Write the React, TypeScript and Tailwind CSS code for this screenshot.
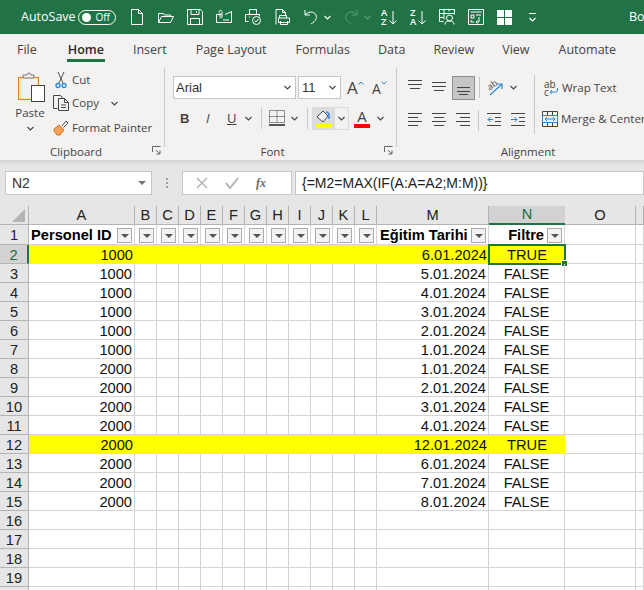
import React from "react";

const grid = "grid grid-cols-[29px_106px_repeat(11,22px)_112px_76px_71px_8px] leading-[17px]";
const ui = { fontFamily: '"Open Sans","Noto Sans",sans-serif' };
const cellFont = { fontFamily: '"Liberation Sans",Arial,sans-serif' };

const Chev = ({ c = "#444", className = "" }: { c?: string; className?: string }) => (
  <svg width="7" height="5" viewBox="0 0 7 5" className={`shrink-0 ${className}`} fill="none" stroke={c} strokeWidth="1.1">
    <path d="M.5 1l3 3 3-3" />
  </svg>
);

const Q = ({ children }: { children: React.ReactNode }) => (
  <svg width="16" height="16" viewBox="0 0 16 16" fill="none" stroke="#fff" strokeWidth="1" className="shrink-0">
    {children}
  </svg>
);

function TitleBar() {
  return (
    <div className="flex h-[34px] shrink-0 items-center whitespace-nowrap bg-[#217346] pl-[21px] text-white" style={ui}>
      <span className="w-[50px] shrink-0 text-[12.5px]">AutoSave</span>
      <div className="ml-[7px] flex h-[15px] w-[38px] shrink-0 items-center justify-between rounded-full border border-white pl-[3px] pr-[5px]">
        <span className="h-[9px] w-[9px] rounded-full bg-white" />
        <span className="text-[10px] leading-none">Off</span>
      </div>
      <div className="ml-[13px] flex shrink-0 items-center gap-[13px]">
        <Q><path d="M2.5 .5h7l4 4v11h-11zM9.5 .5v4h4" /></Q>
        <Q><path d="M.5 13.5v-9h5l1 1.5h6v2M.5 13.5l3-6h12l-3 6z" /></Q>
        <Q><path d="M.5 .5h13l2 2v13H.5zM4 .5v5h8v-5M3.5 15.5v-6h9v6M9.5 2v2" /></Q>
        <Q><path d="M.5 5.5h5M9 5.5l6.5-3v11H.5v-8M3 3.5c0-3 3-3 3 0v4c0 2-2 2-2 0V4M7 11h6" /></Q>
        <Q><path d="M4.5 5V.5h7V5M3.5 12.5h-3V5.5h14v2M4 8h1" /><circle cx="11.5" cy="11.5" r="4" /><path d="M9.5 11.5l1.5 1.5 2.5-3" /></Q>
        <Q><path d="M2 15.5V.5h6.5l3 3v3M8.5.5v3h3M5.5 9V6.5h7V9M4.5 13.5V9h11v4.5zM6.5 12v3.5h7V12" /></Q>
        <div className="flex w-[45px] items-center">
          <Q><path d="M2 1v5h5M2 6c3-4 9-4 11 0 1 3 0 6-5 9" /></Q>
          <Chev c="#fff" className="ml-[5px]" />
        </div>
      </div>
      <div className="ml-[-5px] flex w-[38px] shrink-0 items-center">
        <svg width="16" height="16" viewBox="0 0 16 16" fill="none" stroke="#5d9c7b" strokeWidth="1" className="shrink-0">
          <path d="M14 1v5H9M14 6C11 2 5 2 3 6c-1 3 0 6 5 9" />
        </svg>
        <Chev c="#5d9c7b" className="ml-[5px]" />
      </div>
      <div className="flex shrink-0 items-center gap-[13px]">
        <div className="relative h-[18px] w-[16px] shrink-0 text-[9.5px] font-semibold leading-[9px]">
          <div>A</div><div>Z</div>
          <svg width="8" height="14" viewBox="0 0 8 14" fill="none" stroke="#fff" className="absolute right-0 top-[3px]"><path d="M4 0v13M.5 9.5L4 13l3.500-3.500" /></svg>
        </div>
        <div className="relative h-[18px] w-[16px] shrink-0 text-[9.5px] font-semibold leading-[9px]">
          <div>Z</div><div>A</div>
          <svg width="8" height="14" viewBox="0 0 8 14" fill="none" stroke="#fff" className="absolute right-0 top-[3px]"><path d="M4 0v13M.5 9.5L4 13l3.500-3.500" /></svg>
        </div>
        <Q><path d="M.5 .5h15M.5 .5v12h4M.5 4.500h15M5 .5v10M10 .5v2M15.500 .5v5M.5 8.500h4" /><circle cx="10.500" cy="9" r="3" /><path d="M6 15.500c0-3 2-3.500 4.500-3.500s4.500 .5 4.500 3.500" /></Q>
        <Q><path d="M.5 .5h15v15H.5zM2.500 3h11M3 6h3v3H3zM8 6h5M3 11v2h3M11 8v5H8M9.500 11.500L8 13l1.500 1.500" /></Q>
        <div className="grid h-[15px] w-[15px] shrink-0 grid-cols-2 grid-rows-2 gap-[1px]">
          <span className="bg-white" /><span className="bg-white" /><span className="bg-white" /><span className="bg-white" />
        </div>
      </div>
      <div className="ml-[17px] flex w-[8px] shrink-0 flex-col gap-[3px]">
        <span className="h-px w-[7px] bg-white" />
        <Chev c="#fff" />
      </div>
      <span className="ml-[92px] shrink-0 text-[12.5px]">Book1 - Excel</span>
    </div>
  );
}

function Tabs() {
  const tabs: [string, string][] = [
    ["File", "ml-[17px]"], ["Insert", "ml-[28px]"], ["Page Layout", "ml-[29px]"], ["Formulas", "ml-[29px]"],
    ["Data", "ml-[28px]"], ["Review", "ml-[28px]"], ["View", "ml-[28px]"], ["Automate", "ml-[29px]"],
  ];
  const T = ([t, c]: [string, string]) => <span key={t} className={`${c} shrink-0 pt-[7px] text-[12.5px] text-[#444]`}>{t}</span>;
  return (
    <div className="flex h-[34px] shrink-0 items-start whitespace-nowrap bg-[#f3f2f1]" style={ui}>
      {T(tabs[0])}
      <div className="ml-[30px] flex h-[28px] shrink-0 flex-col items-center border-b-[3px] border-[#217346] px-[1px] pt-[7px] text-[12.5px] font-semibold text-[#2b2b2b]">Home</div>
      {tabs.slice(1).map(T)}
    </div>
  );
}

const Launcher = () => (
  <svg width="9" height="9" viewBox="0 0 9 9" fill="none" stroke="#666" className="absolute right-[3px] top-[1px]">
    <path d="M.5 6V.5H8.500M4 4l4 4M8 4.500V8H4.500" />
  </svg>
);

const GroupLabel = ({ children, launcher, className = "" }: { children: string; launcher?: boolean; className?: string }) => (
  <div className={`relative mt-auto flex h-[14px] justify-center text-[11.5px] leading-[14px] text-[#444] ${className}`} style={ui}>
    {children}
    {launcher && <Launcher />}
  </div>
);

const Lines = ({ rows }: { rows: [number, number, number][] }) => (
  <svg width="15" height="16" viewBox="0 0 15 16" stroke="#444" className="shrink-0">
    {rows.map(([y, a, b], i) => <path key={i} d={`M${a} ${y + 0.5}H${b}`} />)}
  </svg>
);

function Clipboard() {
  return (
    <div className="flex h-[92px] w-[164px] shrink-0 flex-col pb-[1px]">
      <div className="flex">
        <div className="ml-[15px] flex w-[30px] flex-col items-center pt-[3px]">
          <svg width="30" height="31" viewBox="0 0 30 31" className="shrink-0">
            <rect x="3.500" y="6.500" width="20" height="22" fill="#fde4a8" stroke="#e8801f" />
            <rect x="7" y="8" width="15" height="19" fill="#f3f2f1" />
            <path d="M8 7V4h4a2 2 0 014 0h3v3z" fill="#f3f2f1" stroke="#777" />
            <rect x="16.500" y="14.500" width="13" height="16" fill="#fff" stroke="#444" />
          </svg>
          <span className="mt-[3px] text-[11.5px] leading-[15px] text-[#444]" style={ui}>Paste</span>
          <Chev className="mt-[6px]" />
        </div>
        <div className="ml-[8px] flex flex-col text-[11.5px] text-[#444]" style={ui}>
          <div className="flex h-[23px] items-center pt-[1px]">
            <svg width="16" height="18" viewBox="0 0 16 18" fill="none" className="shrink-0">
              <path d="M5 1l5 11M11 1L6 12" stroke="#555" />
              <circle cx="5" cy="14.500" r="2" stroke="#2b88d8" strokeWidth="1.300" />
              <circle cx="11" cy="14.500" r="2" stroke="#2b88d8" strokeWidth="1.300" />
            </svg>
            <span className="ml-[3px] leading-none">Cut</span>
          </div>
          <div className="flex h-[24px] items-center">
            <svg width="16" height="16" viewBox="0 0 16 16" fill="none" stroke="#444" className="shrink-0">
              <path d="M4.500 13.500H.5V.5h7l2 2.500" />
              <path d="M5.500 3.500h6l4 4v8h-10zM11.500 3.500v4h4M8 10h5M8 12.500h5" />
            </svg>
            <span className="ml-[3px] leading-none">Copy</span>
            <Chev className="ml-[12px]" />
          </div>
          <div className="flex h-[25px] items-center">
            <svg width="16" height="16" viewBox="0 0 16 16" className="shrink-0">
              <path d="M1 9l5-4 5 5-4 5H4L1 11z" fill="#f2a05a" stroke="#d9731f" />
              <path d="M9 6l4-5 2 2-4.500 4.500" fill="#f3f2f1" stroke="#555" />
            </svg>
            <span className="ml-[3px] leading-none">Format Painter</span>
          </div>
        </div>
      </div>
      <GroupLabel launcher className="pr-[12px]">Clipboard</GroupLabel>
    </div>
  );
}

function Font() {
  return (
    <div className="flex h-[92px] w-[231px] shrink-0 flex-col pb-[1px]">
      <div className="ml-[8px] mt-[8px] flex items-center" style={cellFont}>
        <div className="flex h-[23px] w-[123px] items-center justify-between border border-[#c6c6c6] bg-white pl-[2px] pr-[4px] text-[13px] text-[#333]">
          Arial<Chev />
        </div>
        <div className="ml-[2px] flex h-[23px] w-[43px] items-center justify-between border border-[#c6c6c6] bg-white pl-[3px] pr-[4px] text-[13px] text-[#333]">
          11<Chev />
        </div>
        <div className="ml-[6px] flex h-[16px] w-[17px] items-start text-[17px] leading-[16px] text-[#444]" style={ui}>
          A
          <svg width="6" height="4" viewBox="0 0 6 4" fill="none" stroke="#2b88d8" className="mt-[1px]"><path d="M.5 3.500L3 1l2.500 2.500" /></svg>
        </div>
        <div className="ml-[8px] flex h-[16px] w-[16px] items-start text-[14px] leading-[17px] text-[#444]" style={ui}>
          A
          <svg width="6" height="4" viewBox="0 0 6 4" fill="none" stroke="#2b88d8" className="mt-[1px]"><path d="M.5 .5L3 3l2.500-2.500" /></svg>
        </div>
      </div>
      <div className="ml-[15px] mt-[8px] flex h-[23px] items-center text-[#444]">
        <span className="w-[26px] text-[13px] font-bold" style={cellFont}>B</span>
        <span className="w-[21px] text-[13px] italic" style={ui}>I</span>
        <span className="w-[18px] text-[13px] underline" style={ui}>U</span>
        <Chev />
        <span className="ml-[9px] h-[21px] w-px bg-[#c8c8c8]" />
        <svg width="16" height="17" viewBox="0 0 16 17" fill="none" className="ml-[7px]">
          <path d="M.5 .5h15v12H.5zM8 .5v12M.5 6.500h15" stroke="#333" strokeDasharray="1 1" />
          <path d="M0 15h16" stroke="#222" strokeWidth="1.500" />
        </svg>
        <Chev className="ml-[6px]" />
        <span className="ml-[9px] h-[21px] w-px bg-[#c8c8c8]" />
        <div className="ml-[4px] flex h-[23px] w-[37px] border border-[#dcdcdc]">
          <div className="flex w-[22px] flex-col items-center bg-[#dcdcdc] pt-[1px]">
            <svg width="16" height="15" viewBox="0 0 16 15" fill="none">
              <path d="M1 8l6-6 5 5-5 6z" stroke="#444" fill="#f3f2f1" />
              <path d="M13 10V6c0-2-2-3-3-3" stroke="#2b88d8" strokeWidth="1.500" />
            </svg>
            <span className="h-[4px] w-[16px] bg-[#ffff00]" />
          </div>
          <div className="flex flex-1 items-center justify-center"><Chev /></div>
        </div>
        <div className="ml-[5px] flex w-[16px] flex-col items-center">
          <span className="text-[15px] leading-[15px] text-[#444]" style={ui}>A</span>
          <span className="h-[4px] w-[16px] bg-[#ff0000]" />
        </div>
        <Chev className="ml-[7px]" />
      </div>
      <GroupLabel launcher className="pr-[16px]">Font</GroupLabel>
    </div>
  );
}

function Alignment() {
  return (
    <div className="flex h-[92px] flex-1 flex-col pb-[1px]">
      <div className="flex flex-1 whitespace-nowrap">
        <div className="ml-[11px] flex w-[126px] shrink-0 flex-col">
          <div className="mt-[7px] flex h-[25px] items-center">
            <div className="mr-[9px]"><Lines rows={[[0, 0, 14], [4, 0, 14], [8, 2, 12]]} /></div>
            <div className="mr-[5px]"><Lines rows={[[2, 0, 14], [6, 0, 14], [10, 2, 12]]} /></div>
            <div className="flex h-[24px] w-[23px] items-center justify-center border border-[#8f8f8f] bg-[#c6c6c6]">
              <Lines rows={[[7, 1, 14], [11, 1, 14], [14, 3, 12]]} />
            </div>
            <span className="ml-[4px] h-[21px] w-px bg-[#c8c8c8]" />
            <span className="relative ml-[7px] block h-[16px] w-[17px]">
              <span className="absolute left-0 top-0 block origin-center rotate-[-35deg] text-[9px] leading-[10px] text-[#444]" style={ui}>ab</span>
              <svg width="17" height="16" viewBox="0 0 17 16" fill="none" className="absolute left-0 top-0">
                <path d="M3 15L15 4M10 4h5v5" stroke="#2b88d8" strokeWidth="1.200" />
              </svg>
            </span>
            <Chev className="ml-[6px]" />
          </div>
          <div className="mt-[9px] flex h-[23px] items-center">
            <div className="mr-[9px]"><Lines rows={[[0, 0, 14], [4, 0, 10], [8, 0, 14], [12, 0, 10]]} /></div>
            <div className="mr-[9px]"><Lines rows={[[0, 0, 14], [4, 2, 12], [8, 0, 14], [12, 2, 12]]} /></div>
            <Lines rows={[[0, 0, 14], [4, 4, 14], [8, 0, 14], [12, 4, 14]]} />
            <span className="ml-[7px] h-[21px] w-px bg-[#c8c8c8]" />
            <svg width="15" height="16" viewBox="0 0 15 16" fill="none" className="ml-[8px]">
              <path d="M0 .5h14M8 4.500h6M8 8.500h6M0 12.500h14" stroke="#444" />
              <path d="M6 6.500H1M3.500 4L1 6.500 3.500 9" stroke="#2b88d8" />
            </svg>
            <svg width="15" height="16" viewBox="0 0 15 16" fill="none" className="ml-[9px]">
              <path d="M0 .5h14M8 4.500h6M8 8.500h6M0 12.500h14" stroke="#444" />
              <path d="M0 6.500h6M3.500 4L6 6.500 3.500 9" stroke="#2b88d8" />
            </svg>
          </div>
        </div>
        <span className="mt-[7px] h-[59px] w-px shrink-0 bg-[#c8c8c8]" />
        <div className="ml-[7px] flex flex-col text-[11.5px] text-[#444]" style={ui}>
          <div className="mt-[8px] flex h-[24px] items-center pl-[2px]">
            <span className="relative h-[16px] w-[15px] text-[10px] leading-[8px]">
              <span className="block">ab</span><span className="block">c</span>
              <svg width="10" height="8" viewBox="0 0 10 8" fill="none" stroke="#2b88d8" className="absolute bottom-0 right-0"><path d="M8.500 0v2a2 2 0 01-2 2H1M3 2L1 4l2 2" /></svg>
            </span>
            <span className="ml-[3px]">Wrap Text</span>
          </div>
          <div className="mt-[7px] flex h-[24px] items-center">
            <svg width="16" height="16" viewBox="0 0 16 16" fill="none" className="shrink-0">
              <path d="M.5 .5h15v15H.5zM.5 4.500h15M.5 11.500h15M5.500 .5v4M10.500 .5v4M5.500 11.500v4M10.500 11.500v4" stroke="#444" />
              <path d="M.5 4.500h15v7H.5z" stroke="#2b88d8" />
              <path d="M3 8h10M5 6L3 8l2 2M11 6l2 2-2 2" stroke="#2b88d8" />
            </svg>
            <span className="ml-[3px]">Merge &amp; Center</span>
          </div>
        </div>
      </div>
      <div className="flex w-[262px] justify-center"><GroupLabel>Alignment</GroupLabel></div>
    </div>
  );
}

function Ribbon() {
  return (
    <div className="flex h-[92px] shrink-0 overflow-hidden bg-[#f3f2f1]">
      <Clipboard />
      <span className="h-[79px] w-px shrink-0 bg-[#c8c8c8]" />
      <Font />
      <span className="h-[79px] w-px shrink-0 bg-[#c8c8c8]" />
      <Alignment />
    </div>
  );
}

function FormulaBar() {
  return (
    <div className="shrink-0 bg-[#e6e6e6]">
      <div className="h-[5px] bg-gradient-to-b from-[#d2d2d2] to-[#e6e6e6]" />
      <div className="flex h-[30px] pl-[5px] pt-[6px]" style={cellFont}>
        <div className="flex w-[147px] items-center justify-between border border-[#c6c6c6] bg-white pl-[6px] pr-[5px] text-[14px] text-[#333]">
          N2
          <span className="h-0 w-0 border-x-[4px] border-t-[4px] border-x-transparent border-t-[#777]" />
        </div>
        <div className="flex w-[30px] flex-col items-center justify-center gap-[2px]">
          <span className="h-[2px] w-[2px] bg-[#a0a0a0]" /><span className="h-[2px] w-[2px] bg-[#a0a0a0]" /><span className="h-[2px] w-[2px] bg-[#a0a0a0]" />
        </div>
        <div className="flex w-[110px] items-center border border-[#c6c6c6] bg-white pl-[13px]">
          <svg width="12" height="12" viewBox="0 0 12 12" stroke="#b4b4b4" strokeWidth="1.500" fill="none"><path d="M1 1l10 10M11 1L1 11" /></svg>
          <svg width="14" height="12" viewBox="0 0 14 12" stroke="#b4b4b4" strokeWidth="2" fill="none" className="ml-[17px]"><path d="M1 6l4 5 8-10" /></svg>
          <span className="ml-[17px] text-[12px] font-bold italic text-[#666]" style={{ fontFamily: '"Liberation Serif",serif' }}>fx</span>
        </div>
        <div className="ml-[3px] flex flex-1 items-center border border-[#c6c6c6] bg-white pl-[6px] text-[14px] text-[#222]">
          {"{=M2=MAX(IF(A:A=A2;M:M))}"}
        </div>
      </div>
      <div className="h-[11px]" />
    </div>
  );
}

const cols = ["A", "B", "C", "D", "E", "F", "G", "H", "I", "J", "K", "L", "M", "N", "O", ""];

function ColHeaders() {
  return (
    <div className={`${grid} h-[19px] grid-rows-[19px] bg-[#e6e6e6] text-[14.670px] text-[#222]`}>
      <div className="flex items-end justify-end border-b border-r border-[#b4b4b4] pb-[2px] pr-[3px]">
        <span className="h-0 w-0 border-b-[13px] border-l-[13px] border-b-[#b4b4b4] border-l-transparent" />
      </div>
      {cols.map((c, i) => (
        <div
          key={i}
          className={c === "N"
            ? "flex items-center justify-center border-b-2 border-[#217346] bg-[#d2d2d2] text-[#1e6b41]"
            : "flex items-center justify-center border-b border-r border-[#b4b4b4]"}
        >
          {c}
        </div>
      ))}
    </div>
  );
}

const Filter = () => (
  <span className="mr-[2px] flex h-[15px] w-[15px] shrink-0 items-center justify-center border border-[#ababab] bg-[#f3f3f3]">
    <span className="h-0 w-0 border-x-[4px] border-t-[4px] border-x-transparent border-t-[#555]" />
  </span>
);

const dates = ["6.01.2024", "5.01.2024", "4.01.2024", "3.01.2024", "2.01.2024", "1.01.2024", "1.01.2024", "2.01.2024", "3.01.2024", "4.01.2024", "12.01.2024", "6.01.2024", "7.01.2024", "8.01.2024"];
const ids = [1000, 1000, 1000, 1000, 1000, 1000, 2000, 2000, 2000, 2000, 2000, 2000, 2000, 2000];

function RowHead({ n, sel }: { n: number | null; sel?: boolean }) {
  return (
    <div className={sel
      ? "flex items-center justify-center border-r-2 border-b border-r-[#217346] border-b-[#b4b4b4] bg-[#d2d2d2] pt-[2px] text-[#1e6b41]"
      : "flex items-center justify-center border-b border-r border-[#b4b4b4] bg-[#e6e6e6] pt-[2px] text-[#222]"}>
      {n}
    </div>
  );
}

const gl = "border-b border-r border-[#d4d4d4]";

function HeaderRow() {
  return (
    <div className={`${grid} h-[20px] grid-rows-[20px] text-[14.670px] font-bold text-black`}>
      <div className="flex items-center justify-center border-b border-r border-[#b4b4b4] bg-[#e6e6e6] pt-[2px] font-normal text-[#222]">1</div>
      <div className={`${gl} flex items-center justify-between pl-[2px] pt-[2px]`}>Personel ID<Filter /></div>
      {cols.slice(1, 12).map((c) => (
        <div key={c} className={`${gl} flex items-center justify-end pt-[2px]`}><Filter /></div>
      ))}
      <div className={`${gl} flex items-center justify-between pl-[3px] pt-[2px]`}>Eğitim Tarihi<Filter /></div>
      <div className={`${gl} flex items-center justify-end gap-[3px] pt-[2px]`}>Filtre<Filter /></div>
      <div className={gl} />
      <div className={gl} />
    </div>
  );
}

function DataRow({ i }: { i: number }) {
  const n = i + 2;
  const yellow = n === 2 || n === 12;
  const g = yellow ? "bg-[#ffff00]" : gl;
  return (
    <div className={`${grid} h-[19px] grid-rows-[19px] text-[14.670px] text-[#111]`}>
      <RowHead n={n} sel={n === 2} />
      <div className={`${g} flex items-center justify-end pr-[2px] pt-[2px]`}>{ids[i]}</div>
      {cols.slice(1, 12).map((c) => <div key={c} className={g} />)}
      <div className={`${g} flex items-center justify-end pr-[2px] pt-[2px]`}>{dates[i]}</div>
      <div className={`${g} relative flex items-center justify-center pt-[2px]`}>
        {yellow ? "TRUE" : "FALSE"}
        {n === 2 && (
          <>
            <span className="absolute bottom-[-1px] left-[-1px] right-[-1px] top-[-1px] border-2 border-[#1f7244]" />
            <span className="absolute bottom-[-3px] right-[-3px] h-[7px] w-[7px] border border-white bg-[#1f7244]" />
          </>
        )}
      </div>
      <div className={gl} />
      <div className={gl} />
    </div>
  );
}

function EmptyRow({ n }: { n: number | null }) {
  return (
    <div className={`${grid} h-[19px] grid-rows-[19px] text-[14.670px]`}>
      <RowHead n={n} />
      {cols.map((c, i) => <div key={i} className={gl} />)}
    </div>
  );
}

export default function App() {
  return (
    <div className="flex h-[590px] w-[644px] flex-col overflow-hidden bg-white">
      <TitleBar />
      <Tabs />
      <Ribbon />
      <FormulaBar />
      <div style={cellFont}>
        <ColHeaders />
        <HeaderRow />
        {ids.map((_, i) => <DataRow key={i} i={i} />)}
        {[16, 17, 18, 19, null].map((n, i) => <EmptyRow key={i} n={n} />)}
      </div>
    </div>
  );
}
